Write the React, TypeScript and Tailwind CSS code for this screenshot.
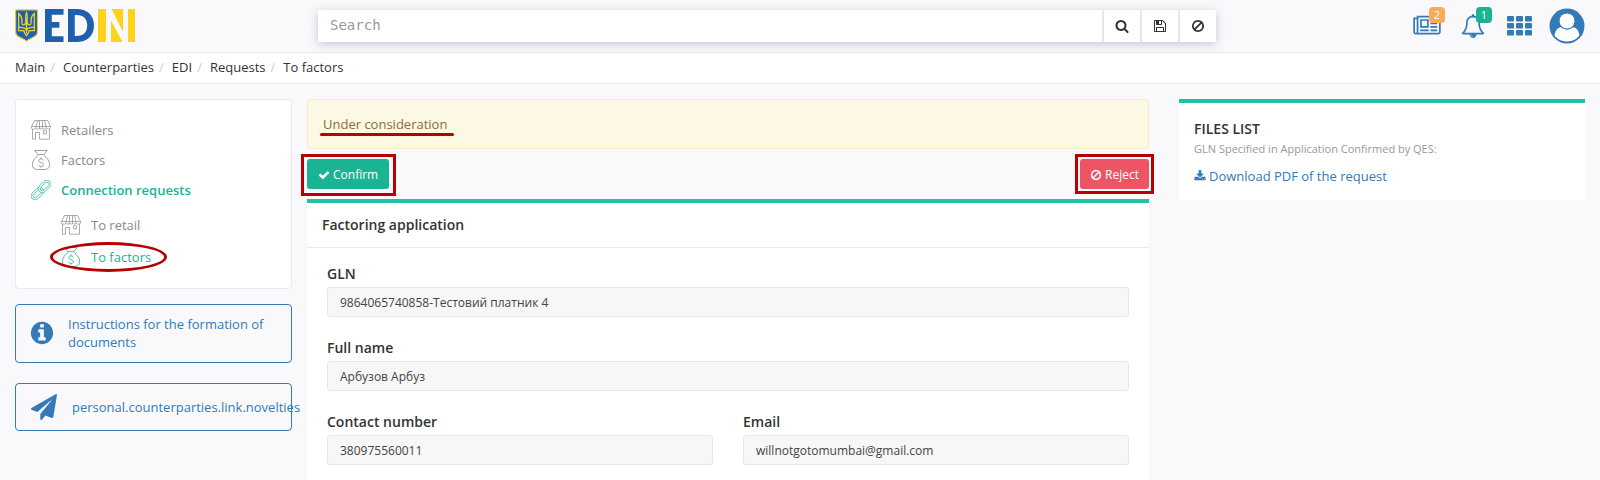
import React from "react";

type IconProps = { className?: string };

const PATHS = {
  search:
    "M1216 832q0-185-131.5-316.5t-316.5-131.5-316.5 131.5-131.5 316.5 131.5 316.5 316.5 131.5 316.5-131.5 131.5-316.5zm512 832q0 52-38 90t-90 38q-54 0-90-38l-343-342q-179 124-399 124-143 0-273.5-55.5t-225-150-150-225-55.5-273.5 55.5-273.5 150-225 225-150 273.5-55.5 273.5 55.5 225 150 150 225 55.5 273.5q0 220-124 399l343 343q37 37 37 90z",
  floppy:
    "M512 1536h768v-384h-768v384zm896 0h128v-896q0-14-10-38.5t-20-34.5l-281-281q-10-10-34-20t-39-10v416q0 40-28 68t-68 28h-576q-40 0-68-28t-28-68v-416h-128v1280h128v-416q0-40 28-68t68-28h832q40 0 68 28t28 68v416zm-384-928v-320q0-13-9.5-22.5t-22.5-9.5h-192q-13 0-22.5 9.5t-9.5 22.5v320q0 13 9.5 22.5t22.5 9.5h192q13 0 22.5-9.5t9.5-22.5zm640 32v928q0 40-28 68t-68 28h-1344q-40 0-68-28t-28-68v-1344q0-40 28-68t68-28h928q40 0 88 20t76 48l280 280q28 28 48 76t20 88z",
  ban: "M1440 893q0-161-87-295l-754 753q137 89 297 89 111 0 211.5-43.5t173.5-116.5 116-174.5 43-212.5zm-999 299l755-754q-135-91-300-91-148 0-273 73t-198 199-73 274q0 162 89 299zm1223-299q0 157-61 300t-163.5 246-245 164-298.5 61-298.5-61-245-164-163.5-246-61-300 61-299.5 163.5-245.5 245-164 298.5-61 298.5 61 245 164 163.5 245.5 61 299.5z",
  check:
    "M1671 566q0 40-28 68l-724 724-136 136q-28 28-68 28t-68-28l-136-136-362-362q-28-28-28-68t28-68l136-136q28-28 68-28t68 28l294 295 656-657q28-28 68-28t68 28l136 136q28 28 28 68z",
  download:
    "M1344 1344q0-26-19-45t-45-19-45 19-19 45 19 45 45 19 45-19 19-45zm256 0q0-26-19-45t-45-19-45 19-19 45 19 45 45 19 45-19 19-45zm128-224v320q0 40-28 68t-68 28h-1472q-40 0-68-28t-28-68v-320q0-40 28-68t68-28h465l135 136q58 56 136 56t136-56l136-136h464q40 0 68 28t28 68zm-325-569q17 41-14 70l-448 448q-18 19-45 19t-45-19l-448-448q-31-29-14-70 17-39 59-39h256v-448q0-26 19-45t45-19h256q26 0 45 19t19 45v448h256q42 0 59 39z",
  info: "M1152 1376v-160q0-14-9-23t-23-9h-96v-512q0-14-9-23t-23-9h-320q-14 0-23 9t-9 23v160q0 14 9 23t23 9h96v320h-96q-14 0-23 9t-9 23v160q0 14 9 23t23 9h448q14 0 23-9t9-23zm-128-896v-160q0-14-9-23t-23-9h-192q-14 0-23 9t-9 23v160q0 14 9 23t23 9h192q14 0 23-9t9-23zm640 416q0 209-103 385.5t-279.5 279.5-385.5 103-385.5-103-279.5-279.5-103-385.5 103-385.5 279.5-279.5 385.5-103 385.5 103 279.5 279.5 103 385.5z",
  plane:
    "M1764 11q33 24 27 64l-256 1536q-5 29-32 45-14 8-31 8-11 0-24-5l-453-185-242 295q-18 23-49 23-13 0-22-4-19-7-30.5-23.5t-11.5-36.5v-349l864-1059-1069 925-395-162q-37-14-40-55-2-40 32-59l1664-960q15-9 32-9 20 0 36 11z",
  bell: "M912 1696q0-16-16-16-59 0-101.5-42.5t-42.5-101.5q0-16-16-16t-16 16q0 73 51.5 124.5t124.5 51.5q16 0 16-16zm-666-288h1300q-266-300-266-832 0-51-24-105t-69-103-121.5-80.5-169.5-31.5-169.5 31.5-121.5 80.5-69 103-24 105q0 532-266 832zm1482 0q0 52-38 90t-90 38h-448q0 106-75 181t-181 75-181-75-75-181h-448q-52 0-90-38t-38-90q50-42 91-88t85-119.5 74.5-158.5 50-206 19.5-260q0-152 117-282.5t307-158.5q-8-19-8-39 0-40 28-68t68-28 68 28 28 68q0 20-8 39 190 28 307 158.5t117 282.5q0 139 19.5 260t50 206 74.5 158.5 85 119.5 91 88z",
  news: "M1024 512h-384v384h384v-384zm128 640v128h-640v-128h640zm0-768v640h-640v-640h640zm640 768v128h-512v-128h512zm0-256v128h-512v-128h512zm0-256v128h-512v-128h512zm0-256v128h-512v-128h512zm-1536 960v-960h-128v960q0 26 19 45t45 19 45-19 19-45zm1664 0v-1088h-1536v1088q0 33-11 64h1483q26 0 45-19t19-45zm128-1216v1216q0 80-56 136t-136 56h-1664q-80 0-136-56t-56-136v-1088h256v-128h1792z",
};

function Glyph({ name, className, wide }: { name: keyof typeof PATHS; className: string; wide?: boolean }) {
  return (
    <svg
      viewBox={wide ? "0 0 2048 1792" : "0 0 1792 1792"}
      fill="currentColor"
      aria-hidden="true"
      className={`shrink-0 ${className}`}
    >
      <path d={PATHS[name]} />
    </svg>
  );
}

function StoreIcon({ className = "" }: IconProps) {
  return (
    <svg viewBox="0 0 20 20" fill="none" stroke="currentColor" strokeWidth="0.7" aria-hidden="true" className={`size-5 shrink-0 ${className}`}>
      <path d="M3.500.5h13L19.500 6.500H.5zM6.500.5 5 6.500M8.500.5v6M11.500.5v6M13.500.5 15 6.500" />
      <path d="M.5 6.500v1.300c0 .9.7 1.300 1.500 1.300h1.200c.8 0 1.800-.4 1.800-1.300V6.500M5 7.800c0 .9.700 1.300 1.500 1.300h.8c.8 0 1.200-.4 1.200-1.300V6.500M8.500 7.800c0 .9.700 1.300 1.500 1.300s1.500-.4 1.500-1.300V6.500M11.500 7.800c0 .9.600 1.300 1.300 1.300h.7c.8 0 1.500-.4 1.500-1.300V6.500M15 7.800c0 .9 1 1.300 1.800 1.300H18c.8 0 1.500-.4 1.500-1.300V6.500" />
      <path d="M1.500 9.200v10h3v-6.700h4v6.700h10v-10M12.500 10.800h3v3h-3z" />
    </svg>
  );
}

function BagIcon({ className = "" }: IconProps) {
  return (
    <svg viewBox="0 0 20 20" fill="none" stroke="currentColor" strokeWidth="0.8" aria-hidden="true" className={`size-5 shrink-0 ${className}`}>
      <path d="M7 4.400 3.600.5h12.600L13 4.400M6.600 4.600h6.800M7 5.400C3.800 8 1.300 11.200 1.300 14.600c0 3.400 2.200 4.900 5 4.900h7.400c2.800 0 5-1.500 5-4.900 0-3.400-2.500-6.600-5.700-9.200" />
      <path d="M12.400 10.400c-.3-1-1.200-1.500-2.400-1.500-1.400 0-2.400.7-2.400 1.800 0 2.600 4.900 1.100 4.900 3.800 0 1.200-1 1.900-2.500 1.900-1.300 0-2.300-.6-2.500-1.700M10 7.600v1.300M10 16.400v1.300" />
    </svg>
  );
}

function ChainIcon() {
  return (
    <svg viewBox="0 0 20 20" fill="none" stroke="currentColor" strokeWidth="0.7" aria-hidden="true" className="size-5 shrink-0">
      <g transform="rotate(-45 10 10)">
        <rect x="-2.300" y="6" width="14.500" height="8" rx="4" />
        <rect x="-.3" y="8" width="10.500" height="4" rx="2" />
        <path
          fill="#fff"
          fillRule="evenodd"
          d="M11.800 6h6.500a4 4 0 0 1 0 8h-6.500a4 4 0 0 1 0-8zm0 2a2 2 0 0 0 0 4h6.500a2 2 0 0 0 0-4z"
        />
      </g>
    </svg>
  );
}

function Logo() {
  return (
    <svg viewBox="0 0 120 33" role="img" aria-label="EDIN" className="h-[33px] w-[120px]">
      <path d="M1.500.9h20a1 1 0 0 1 1 1v20.600c0 2.700-1.300 4.300-3.600 5.400-3 1.400-5.400 2.500-7.400 4.200-2-1.700-4.400-2.800-7.400-4.200C1.800 26.800.6 25.200.6 22.500V1.900a1 1 0 0 1 .9-1z" fill="#1f5fae" stroke="#e5cc35" strokeWidth="1.200" />
      <path
        d="M3.700 4.600v17h5.100c.2 2 1 3.200 2.700 5.200 1.700-2 2.500-3.200 2.700-5.200h5.100v-17c-2.800 2.300-3.600 5-3.200 8.300.2 1.700.2 2.600-.9 2.900-2.300.3-3.200-1.500-3-4.400.1-2.900.4-5.500-.7-7.800-1.100 2.300-.8 4.900-.7 7.800.2 2.900-.7 4.700-3 4.400-1.100-.3-1.100-1.200-.9-2.900.4-3.300-.4-6-3.200-8.300zM11.500 12v12.500M3.700 18.500c4.500-.3 7 .5 7.800 3.100.8-2.600 3.300-3.400 7.800-3.100"
        fill="none"
        stroke="#f0d126"
        strokeWidth="1.300"
      />
      <path d="M30 0h18.500v5.800H36.800v7.200h7.600v5.800h-7.600v8.400h11.700V33H30z" fill="#1f5fae" />
      <path fillRule="evenodd" d="M53 0h8.500C72 0 79 6 79 16.500S72 33 61.500 33H53zm6.800 6v21h2c6.600 0 10.400-3.800 10.400-10.500S68.400 6 61.800 6z" fill="#1f5fae" />
      <path d="M83 0h8v33h-8zM113 0h7v33h-7zM96.500 0H108v23zM96 11.500 107.500 33H96z" fill="#ffd21a" />
    </svg>
  );
}

const CRUMBS = ["Main", "Counterparties", "EDI", "Requests", "To factors"];

function Field({ id, label, value, type = "text" }: { id: string; label: string; value: string; type?: string }) {
  return (
    <div>
      <label htmlFor={id} className="block pb-[3px] text-sm leading-5 font-semibold">
        {label}
      </label>
      <input
        id={id}
        type={type}
        readOnly
        defaultValue={value}
        className="block h-[30px] w-full rounded-[3px] border border-[#e5e6e7] bg-[#f7f7f7] px-3 text-xs text-[#444] outline-none"
      />
    </div>
  );
}

export default function App() {
  return (
    <div className="flex min-h-screen flex-col bg-[#f9f9fc] font-['Open_Sans','Noto_Sans',sans-serif] text-[13px] leading-[18px] text-[#333]">
      <header className="flex h-[53px] items-center justify-between border-b border-[#e7eaec] px-[15px]">
        <a href="#main" className="w-[303px] pb-px">
          <Logo />
        </a>
        <form role="search" onSubmit={(e) => e.preventDefault()} className="flex h-8 max-w-[900px] grow gap-0.5 bg-[#e5e6e7] shadow-[0_2px_10px_rgba(40,55,90,0.25)]">
          <input
            type="search"
            aria-label="Search"
            placeholder="Search"
            className="min-w-0 grow bg-white px-3 pb-0.5 font-['DejaVu_Sans_Mono',monospace] text-sm outline-none placeholder:text-[#999]"
          />
          <button type="submit" aria-label="Find" className="grid w-9 place-items-center bg-white">
            <Glyph name="search" className="size-[14px]" />
          </button>
          <button type="button" aria-label="Save" className="grid w-9 place-items-center bg-white">
            <Glyph name="floppy" className="size-[14px]" />
          </button>
          <button type="button" aria-label="Clear" className="grid w-9 place-items-center bg-white">
            <Glyph name="ban" className="size-[14px]" />
          </button>
        </form>
        <nav aria-label="Account" className="flex w-[369px] items-center justify-end text-[#337ab7]">
          <button type="button" aria-label="News" className="relative mr-5">
            <Glyph name="news" wide className="h-6 w-7" />
            <span className="absolute -top-[7px] -right-1 size-4 rounded-sm bg-[#f8ac59] text-center text-[11px] leading-4 text-white">2</span>
          </button>
          <button type="button" aria-label="Notifications" className="relative mr-[22px]">
            <Glyph name="bell" className="size-6" />
            <span className="absolute -top-[7px] -right-[7px] size-4 rounded-sm bg-[#1ab394] text-center text-[11px] leading-4 text-white">1</span>
          </button>
          <button type="button" aria-label="Services" className="mr-[17px]">
            <svg viewBox="0 0 25 20" fill="currentColor" aria-hidden="true" className="h-5 w-[25px]">
              {[0, 7, 14].map((y) =>
                [0, 9, 18].map((x) => <rect key={`${x}-${y}`} x={x} y={y} width="7" height="5.500" rx="1" />)
              )}
            </svg>
          </button>
          <button type="button" aria-label="Profile">
            <svg viewBox="0 0 36 36" aria-hidden="true" className="size-9">
              <circle cx="18" cy="18" r="17.500" fill="currentColor" />
              <path d="M5.500 27.500c.8-4.800 3-8 6.400-8.200 1.700 1.300 3.800 2.100 6.100 2.100s4.400-.8 6.100-2.100c3.400.2 5.600 3.400 6.400 8.200A15.300 15.300 0 0 1 18 33.400a15.300 15.300 0 0 1-12.500-5.900z" fill="#fff" />
              <circle cx="18" cy="13" r="8" fill="#fff" stroke="currentColor" strokeWidth="1" />
            </svg>
          </button>
        </nav>
      </header>

      <nav aria-label="Breadcrumb" className="border-b border-[#e7eaec] bg-white px-[15px] pt-[5px] pb-[7px]">
        <ol className="flex">
          {CRUMBS.map((c, i) => (
            <li key={c} className="flex">
              {i > 0 && <span className="pr-2 pl-[5px] text-[#ccc]">/</span>}
              <a href="#main">{c}</a>
            </li>
          ))}
        </ol>
      </nav>

      <div id="main" className="grid grow grid-cols-[277px_minmax(0,857fr)_minmax(0,436fr)] px-[15px] pt-[15px]">
        <aside>
          <nav aria-label="Sections" className="rounded-sm border border-[#e7eaf0] bg-white p-[15px] text-[#888]">
            <ul>
              <li>
                <a href="#retailers" className="flex h-[30px] items-center gap-2.5">
                  <StoreIcon />
                  Retailers
                </a>
              </li>
              <li>
                <a href="#factors" className="flex h-[30px] items-center gap-2.5">
                  <BagIcon />
                  Factors
                </a>
              </li>
              <li>
                <a href="#requests" className="flex h-[30px] items-center gap-2.5 font-semibold text-[#1ab394]">
                  <ChainIcon />
                  Connection requests
                </a>
                <ul className="pt-1 pl-[30px]">
                  <li>
                    <a href="#to-retail" className="flex h-8 items-center gap-2.5">
                      <StoreIcon />
                      To retail
                    </a>
                  </li>
                  <li className="relative">
                    <a href="#to-factors" className="flex h-8 items-center gap-2.5 text-[#1ab394]">
                      <BagIcon />
                      To factors
                    </a>
                    <span className="pointer-events-none absolute top-px -left-[11px] h-[30px] w-[117px] rounded-[50%] border-[3px] border-[#b80000]" />
                  </li>
                </ul>
              </li>
            </ul>
          </nav>
          <a href="#instructions" className="mt-[15px] flex items-center gap-[13px] rounded-sm border border-[#337ab7] pt-2.5 pr-[15px] pb-[11px] pl-[13px] text-[#337ab7]">
            <Glyph name="info" className="size-[26px]" />
            Instructions for the formation of documents
          </a>
          <a href="#novelties" className="mt-5 flex items-center gap-[15px] rounded-sm border border-[#337ab7] py-2.5 pl-[15px] text-[#337ab7]">
            <Glyph name="plane" className="size-[26px]" />
            personal.counterparties.link.novelties
          </a>
        </aside>

        <main className="flex flex-col pl-[15px]">
          <div role="status" className="rounded-sm border border-[#faebcc] bg-[#fcf8e3] p-[15px] text-[#8a6d3b]">
            <span className="relative inline-block">
              Under consideration
              <span className="pointer-events-none absolute -right-[7px] -bottom-[3px] -left-[3px] h-[3px] rounded-full bg-[#b80000]" />
            </span>
          </div>
          <div className="flex justify-between py-2.5">
            <div className="relative">
              <button type="button" className="flex h-[30px] items-center gap-[3px] rounded-[3px] bg-[#1ab394] px-[11px] pt-px text-xs text-white">
                <Glyph name="check" className="size-3" />
                Confirm
              </button>
              <span className="pointer-events-none absolute -top-[5px] -right-[7px] -bottom-[7px] -left-1.5 border-[3px] border-[#b80000]" />
            </div>
            <div className="relative">
              <button type="button" className="flex h-[30px] items-center gap-[3px] rounded-[3px] bg-[#ed5565] px-2.5 pt-px text-xs text-white">
                <Glyph name="ban" className="size-3" />
                Reject
              </button>
              <span className="pointer-events-none absolute -inset-[5px] border-[3px] border-[#b80000]" />
            </div>
          </div>
          <section className="grow border-t-4 border-[#1fc2a3] bg-white">
            <h1 className="border-b border-[#e7eaec] px-[15px] py-3 text-sm leading-5 font-semibold">Factoring application</h1>
            <div className="grid grid-cols-2 gap-x-[30px] gap-y-[21px] px-5 pt-4 pb-5">
              <div className="col-span-2">
                <Field id="gln" label="GLN" value="9864065740858-Тестовий платник 4" />
              </div>
              <div className="col-span-2">
                <Field id="full-name" label="Full name" value="Арбузов Арбуз" />
              </div>
              <Field id="phone" label="Contact number" type="tel" value="380975560011" />
              <Field id="email" label="Email" type="email" value="willnotgotomumbai@gmail.com" />
            </div>
          </section>
        </main>

        <aside className="pl-[30px]">
          <section className="border-t-4 border-[#1fc2a3] bg-white p-[15px]">
            <h2 className="pt-px text-sm leading-5 font-semibold">FILES LIST</h2>
            <p className="pt-px pb-[9px] text-[11px] text-[#999]">GLN Specified in Application Confirmed by QES:</p>
            <a href="#download" className="flex items-center gap-[3px] text-[#337ab7]">
              <Glyph name="download" className="size-3" />
              Download PDF of the request
            </a>
          </section>
        </aside>
      </div>
    </div>
  );
}
